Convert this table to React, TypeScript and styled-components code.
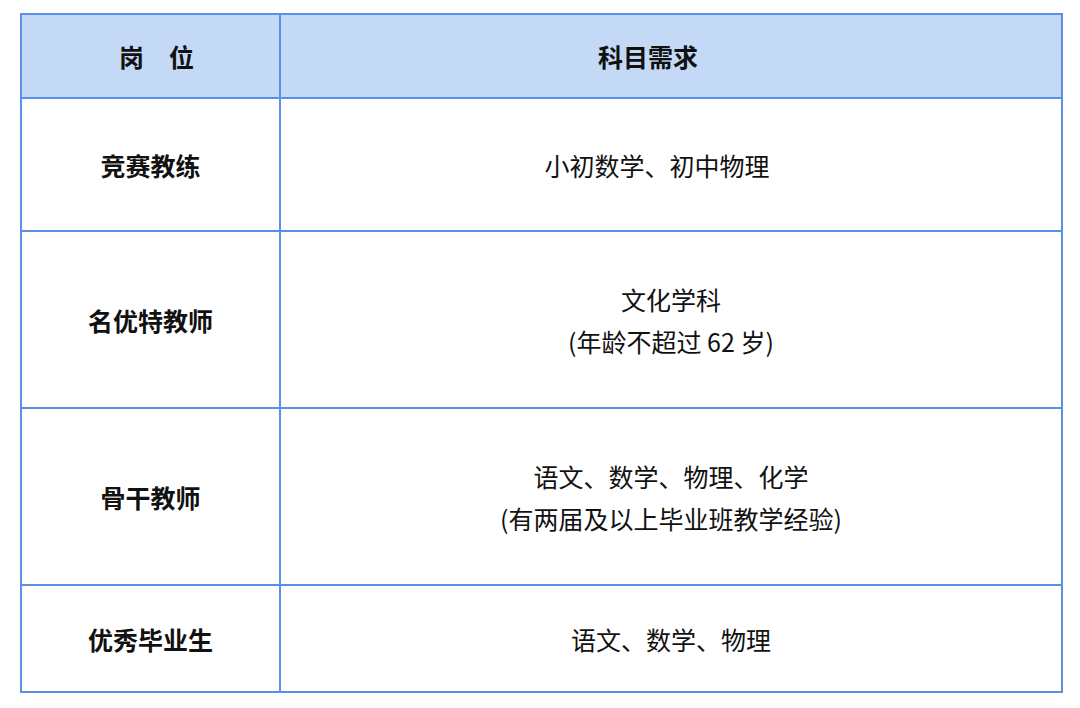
import { Fragment } from "react";
import styled, { createGlobalStyle } from "styled-components";

const GlobalStyle = createGlobalStyle`
  html, body {
    margin: 0;
    padding: 0;
    background: #ffffff;
  }
  body {
    font-family: "Noto Sans CJK SC", "Noto Sans", sans-serif;
    color: #111111;
  }
`;

const Page = styled.div`
  width: 1080px;
  height: 708px;
  padding: 13px 0 0 20px;
  box-sizing: border-box;
`;

const Table = styled.div`
  width: 1043px;
  display: grid;
  grid-template-columns: 257px 780px;
  grid-template-rows: 82px 131px 175px 175px 105px;
  gap: 2px;
  padding: 2px;
  box-sizing: border-box;
  background: #5b90e8;
`;

const Cell = styled.div<{ $head?: boolean; $bold?: boolean; $pad?: string }>`
  display: flex;
  flex-direction: column;
  align-items: center;
  justify-content: center;
  padding: ${(p) => p.$pad ?? "0"};
  background: ${(p) => (p.$head ? "#c4d9f5" : "#ffffff")};
  font-size: 25px;
  line-height: 42px;
  font-weight: ${(p) => (p.$bold ? 700 : 400)};
  text-align: center;
`;

const rows: { role: string; lines: string[]; pad?: string }[] = [
  { role: "竞赛教练", lines: ["小初数学、初中物理"], pad: "0 28px 0 0" },
  { role: "名优特教师", lines: ["文化学科", "(年龄不超过 62 岁)"] },
  { role: "骨干教师", lines: ["语文、数学、物理、化学", "(有两届及以上毕业班教学经验)"] },
  { role: "优秀毕业生", lines: ["语文、数学、物理"] },
];

export default function App() {
  return (
    <>
      <GlobalStyle />
      <Page>
        <Table>
          <Cell $head $bold $pad="0 0 0 12px">岗　位</Cell>
          <Cell $head $bold $pad="0 46px 0 0">科目需求</Cell>
          {rows.map((r) => (
            <Fragment key={r.role}>
              <Cell $bold>{r.role}</Cell>
              <Cell $pad={r.pad}>
                {r.lines.map((l) => (
                  <span key={l}>{l}</span>
                ))}
              </Cell>
            </Fragment>
          ))}
        </Table>
      </Page>
    </>
  );
}
